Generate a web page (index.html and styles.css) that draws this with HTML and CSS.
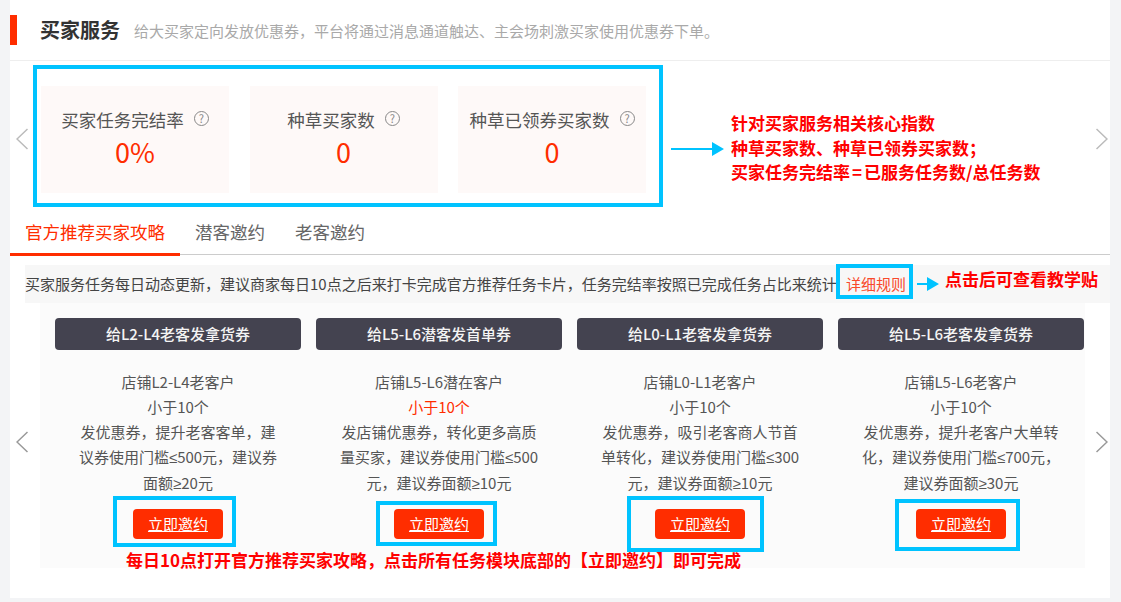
FILE: index.html
```html
<!DOCTYPE html>
<html lang="zh-CN">
<head>
    <meta charset="UTF-8">
    <title>买家服务</title>
    <link rel="stylesheet" href="styles.css">
</head>
<body>
    <div class="page">
        <div class="page-head">
            <span class="head-bar"></span>
            <h1>买家服务</h1>
            <p>给大买家定向发放优惠券，平台将通过消息通道触达、主会场刺激买家使用优惠券下单。</p>
        </div>

        <div class="carousel metrics-row">
            <div class="arrow arrow-left">
                <svg width="12" height="22" viewBox="0 0 12 22"><path d="M11.500 1 1 11l10.500 10" /></svg>
            </div>
            <div class="metrics">
                <div class="metric">
                    <div class="metric-label">买家任务完结率<span class="help">?</span></div>
                    <div class="metric-value">0%</div>
                </div>
                <div class="metric">
                    <div class="metric-label">种草买家数<span class="help">?</span></div>
                    <div class="metric-value">0</div>
                </div>
                <div class="metric">
                    <div class="metric-label">种草已领券买家数<span class="help">?</span></div>
                    <div class="metric-value">0</div>
                </div>
            </div>
            <div class="arrow arrow-right">
                <svg width="12" height="22" viewBox="0 0 12 22"><path d="M.5 1 11 11 .5 21" /></svg>
            </div>
        </div>

        <div class="tabs">
            <div class="tab active">官方推荐买家攻略</div>
            <div class="tab">潜客邀约</div>
            <div class="tab">老客邀约</div>
        </div>

        <div class="notice">
            买家服务任务每日动态更新，建议商家每日10点之后来打卡完成官方推荐任务卡片，任务完结率按照已完成任务占比来统计
            <a class="notice-link">详细规则</a>
        </div>

        <div class="carousel">
            <div class="arrow arrow-left-low">
                <svg width="12" height="22" viewBox="0 0 12 22"><path d="M11.500 1 1 11l10.500 10" /></svg>
            </div>
            <div class="coupons">
                <div class="coupon">
                    <div class="coupon-title">给L2-L4老客发拿货券</div>
                    <div class="coupon-text">
                        店铺L2-L4老客户<br>
                        小于10个<br>
                        发优惠券，提升老客客单，建<br>
                        议券使用门槛<span class="sym">≤</span>500元，建议券<br>
                        面额<span class="sym">≥</span>20元
                    </div>
                    <a class="invite">立即邀约</a>
                </div>
                <div class="coupon">
                    <div class="coupon-title">给L5-L6潜客发首单券</div>
                    <div class="coupon-text">
                        店铺L5-L6潜在客户<br>
                        <span class="hot">小于10个</span><br>
                        发店铺优惠券，转化更多高质<br>
                        量买家，建议券使用门槛<span class="sym">≤</span>500<br>
                        元，建议券面额<span class="sym">≥</span>10元
                    </div>
                    <a class="invite">立即邀约</a>
                </div>
                <div class="coupon">
                    <div class="coupon-title">给L0-L1老客发拿货券</div>
                    <div class="coupon-text">
                        店铺L0-L1老客户<br>
                        小于10个<br>
                        发优惠券，吸引老客商人节首<br>
                        单转化，建议券使用门槛<span class="sym">≤</span>300<br>
                        元，建议券面额<span class="sym">≥</span>10元
                    </div>
                    <a class="invite">立即邀约</a>
                </div>
                <div class="coupon">
                    <div class="coupon-title">给L5-L6老客发拿货券</div>
                    <div class="coupon-text">
                        店铺L5-L6老客户<br>
                        小于10个<br>
                        发优惠券，提升老客户大单转<br>
                        化，建议券使用门槛<span class="sym">≤</span>700元，<br>
                        建议券面额<span class="sym">≥</span>30元
                    </div>
                    <a class="invite">立即邀约</a>
                </div>
            </div>
            <div class="arrow arrow-right-low">
                <svg width="12" height="22" viewBox="0 0 12 22"><path d="M.5 1 11 11 .5 21" /></svg>
            </div>
        </div>

        <!-- 标注层 -->
        <div class="mark mark-metrics"></div>
        <div class="mark mark-rule"></div>
        <div class="mark mark-btn1"></div>
        <div class="mark mark-btn2"></div>
        <div class="mark mark-btn3"></div>
        <div class="mark mark-btn4"></div>

        <svg class="pointer pointer-metrics" width="53" height="14" viewBox="0 0 53 14"><path d="M0 6h41V0l12 7-12 7V8H0z" /></svg>
        <svg class="pointer pointer-rule" width="22" height="14" viewBox="0 0 22 14"><path d="M0 6h10V0l12 7-12 7V8H0z" /></svg>

        <div class="note note-metrics">
            针对买家服务相关核心指数<br>
            种草买家数、种草已领券买家数；<br>
            买家任务完结率<span class="note-eq">=</span>已服务任务数/总任务数
        </div>
        <div class="note note-rule">点击后可查看教学贴</div>
        <div class="note note-invite">每日10点打开官方推荐买家攻略，点击所有任务模块底部的【立即邀约】即可完成</div>
    </div>
</body>
</html>
```

FILE: styles.css
```css
body {
    margin: 0;
    background: #f3f4f6;
    font-family: "Noto Sans CJK SC", "Liberation Sans", sans-serif;
    color: #555;
}
.page {
    position: relative;
    width: 1100px;
    height: 598px;
    margin-left: 10px;
    background: #fff;
}
.page-head {
    display: flex;
    align-items: center;
    height: 60px;
    border-bottom: 1px solid #eee;
}
.head-bar {
    width: 7px;
    height: 30px;
    margin-top: -1px;
    background: #ff2d00;
}
.page-head h1 {
    margin: -2px 14px 0 23px;
    font-size: 20px;
    font-weight: bold;
    color: #333;
}
.page-head p {
    margin: 0;
    font-size: 15px;
    color: #a9a9a9;
}
.carousel {
    display: flex;
    align-items: center;
}
.metrics-row {
    height: 146px;
}
.arrow {
    flex: none;
    display: flex;
}
.arrow svg {
    fill: none;
    stroke: #bbb;
    stroke-width: 1.500;
}
.arrow-left {
    width: 25px;
    padding-left: 6px;
    margin-top: 10px;
}
.arrow-left-low {
    width: 24px;
    padding-left: 6px;
    margin-top: 13px;
}
.arrow-right {
    margin-left: auto;
    margin-right: 2px;
    margin-top: 10px;
}
.arrow-right-low {
    margin-left: auto;
    margin-right: 2px;
    margin-top: 13px;
}
.arrow-left-low svg,
.arrow-right-low svg {
    stroke: #999;
}
.metrics {
    display: flex;
    gap: 20.500px;
    margin-top: 11px;
}
.metric {
    width: 188px;
    height: 107px;
    background: #fef9f8;
    text-align: center;
}
.metric-label {
    padding-top: 20px;
    font-size: 17.500px;
    line-height: 28px;
}
.help {
    display: inline-block;
    width: 13px;
    height: 13px;
    margin-left: 10px;
    border: 1px solid #888;
    border-radius: 50%;
    font-size: 11px;
    line-height: 13px;
    vertical-align: 4px;
    color: #888;
}
.metric-value {
    font-size: 27px;
    line-height: 36px;
    color: #ff2d00;
}
.tabs {
    display: flex;
    height: 47px;
    border-bottom: 1px solid #ccc;
}
.tab {
    height: 47px;
    padding: 0 15px;
    font-size: 17.500px;
    line-height: 50px;
    color: #666;
}
.tab.active {
    height: 46px;
    border-bottom: 3px solid #ff2d00;
    color: #ff2d00;
}
.notice {
    margin: 10px 0 0 15px;
    height: 38px;
    background: #f7f7f7;
    font-size: 15px;
    line-height: 38px;
    color: #444;
    white-space: nowrap;
}
.notice-link {
    margin-left: 6px;
    color: #f9492b;
}
.coupons {
    display: grid;
    grid-template-columns: repeat(4, 246px);
    gap: 15px;
    width: 1030px;
    padding: 15px 0 29px 15px;
    background: #fbfbfb;
}
.coupon {
    text-align: center;
}
.coupon-title {
    height: 32px;
    border-radius: 4px;
    background: #444350;
    font-size: 15px;
    font-weight: 500;
    line-height: 32px;
    color: #f4f4f4;
}
.coupon-text {
    margin-top: 19px;
    font-size: 15px;
    line-height: 25px;
    white-space: nowrap;
}
.sym {
    font-family: "Liberation Sans", sans-serif;
}
.hot {
    color: #ff2d00;
}
.invite {
    display: block;
    width: 90px;
    height: 30px;
    margin: 13px auto 0;
    border-radius: 4px;
    background: #ff2d00;
    font-size: 15px;
    line-height: 30px;
    text-decoration: underline;
    color: #fff;
}

/* 标注 */
.mark {
    position: absolute;
    box-sizing: border-box;
    border: 4px solid #00c3ff;
}
.mark-metrics { left: 23px; top: 65px; width: 630px; height: 142px; }
.mark-rule { left: 826px; top: 264px; width: 77px; height: 35px; }
.mark-btn1 { left: 103px; top: 496px; width: 123px; height: 51px; }
.mark-btn2 { left: 366px; top: 501px; width: 121px; height: 45px; }
.mark-btn3 { left: 617px; top: 496px; width: 137px; height: 56px; }
.mark-btn4 { left: 885px; top: 499px; width: 125px; height: 52px; }
.pointer {
    position: absolute;
    fill: #00c3ff;
}
.pointer-metrics { left: 661px; top: 142px; }
.pointer-rule { left: 907px; top: 277px; }
.note {
    position: absolute;
    font-size: 17px;
    font-weight: bold;
    color: #f00;
    white-space: nowrap;
}
.note-eq {
    margin: 0 2px;
}
.note-metrics { left: 721px; top: 111px; line-height: 24.500px; }
.note-rule { left: 935px; top: 267px; line-height: 24px; }
.note-invite { left: 116px; top: 548px; line-height: 24px; }
```
